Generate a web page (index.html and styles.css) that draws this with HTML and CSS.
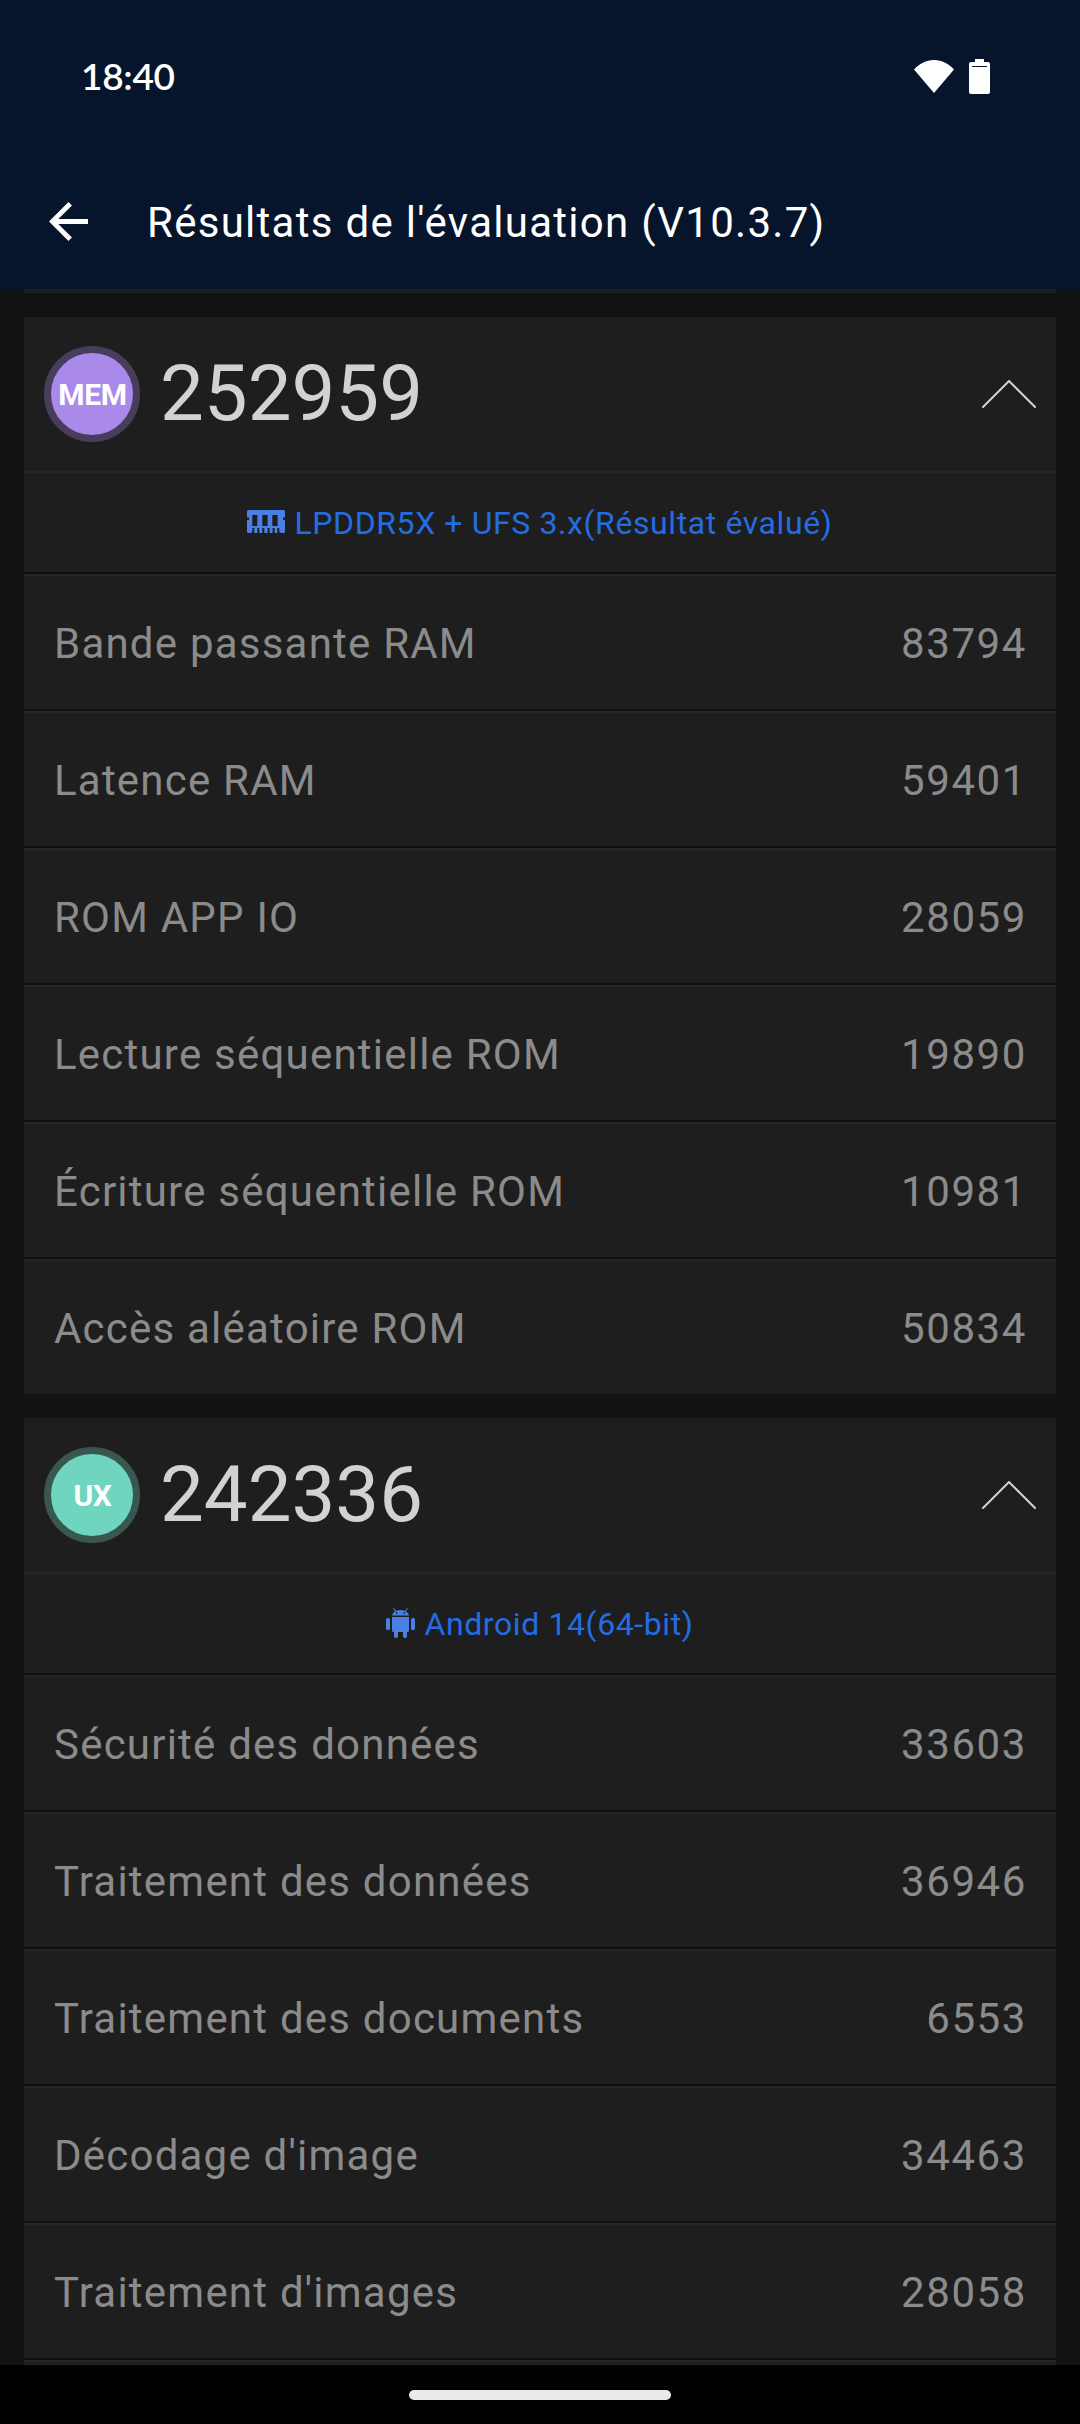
FILE: index.html
```html
<!DOCTYPE html>
<html lang="fr">
<head>
  <meta charset="UTF-8">
  <title>Résultats de l'évaluation</title>
  <link rel="stylesheet" href="styles.css">
</head>
<body>

  <!-- Status bar + toolbar -->
  <header class="header">
    <div class="status-bar">
      <span class="clock">18:40</span>
      <div class="status-icons">
        <svg class="wifi" viewBox="0 0 40 33"><path d="M0 9.5C5 4 12 0 20 0s15 4 20 9.5L20 33z"/></svg>
        <svg class="battery" viewBox="0 0 21 35"><path fill-rule="evenodd" d="M6 0h9v3h4a2 2 0 0 1 2 2v28a2 2 0 0 1-2 2H2a2 2 0 0 1-2-2V5a2 2 0 0 1 2-2h4zM3 7v1h15V7z"/></svg>
      </div>
    </div>
    <div class="toolbar">
      <svg class="back" viewBox="4 4 16 16"><path d="M20 11H7.83l5.59-5.59L12 4l-8 8 8 8 1.41-1.41L7.83 13H20z"/></svg>
      <h1 class="title">Résultats de l'évaluation (V10.3.7)</h1>
    </div>
  </header>

  <main class="results">
    <div class="card-end"></div>

    <!-- Memory -->
    <section class="card">
      <div class="card-head">
        <span class="badge mem">MEM</span>
        <span class="score">252959</span>
        <svg class="chevron" viewBox="0 0 54 28"><path d="M1 27L27 1l26 26"/></svg>
      </div>
      <div class="device">
        <svg class="icon-ram" viewBox="0 0 38 23"><path fill-rule="evenodd" d="M1 0h36l1 1v6.500h-2V10h2v12l-1 1h-3l-1.700-1v-4h-2v5h-2.700v-5h-2v5h-3v-5h-2v5h-3.300v-5h-2v5h-3v-5h-2v5H7.300v-5h-2v4L4 23H1l-1-1V10h2V7.500H0V1zM5.300 5v11h5V5zM15.300 5v11h5.300V5zM25.300 5v11h5.300V5z"/></svg>
        <span>LPDDR5X + UFS 3.x(Résultat évalué)</span>
      </div>
      <div class="row"><span>Bande passante RAM</span><span class="value">83794</span></div>
      <div class="row"><span>Latence RAM</span><span class="value">59401</span></div>
      <div class="row"><span>ROM APP IO</span><span class="value">28059</span></div>
      <div class="row"><span>Lecture séquentielle ROM</span><span class="value">19890</span></div>
      <div class="row"><span>Écriture séquentielle ROM</span><span class="value">10981</span></div>
      <div class="row"><span>Accès aléatoire ROM</span><span class="value">50834</span></div>
    </section>

    <!-- User experience -->
    <section class="card">
      <div class="card-head">
        <span class="badge ux">UX</span>
        <span class="score">242336</span>
        <svg class="chevron" viewBox="0 0 54 28"><path d="M1 27L27 1l26 26"/></svg>
      </div>
      <div class="device">
        <svg class="icon-android" viewBox="0 0 29 30"><path fill-rule="evenodd" d="M8 0l2 3q4.500-2 9 0l2-3 .8.500-1.800 3q2.500 1.500 3 4H6q.5-2.500 3-4L7.200.5zM10 4.200v1.500h1.500V4.200zM17.500 4.200v1.500H19V4.200zM6 9h17v13.500q0 1.500-1.500 1.500H21v4.500q0 1.500-2 1.500t-2-1.500V24h-5v4.500q0 1.500-2 1.500t-2-1.500V24h-.5Q6 24 6 22.500z"/><rect x="0" y="10" width="4" height="12" rx="1.500"/><rect x="25" y="10" width="4" height="12" rx="1.500"/></svg>
        <span>Android 14(64-bit)</span>
      </div>
      <div class="row"><span>Sécurité des données</span><span class="value">33603</span></div>
      <div class="row"><span>Traitement des données</span><span class="value">36946</span></div>
      <div class="row"><span>Traitement des documents</span><span class="value">6553</span></div>
      <div class="row"><span>Décodage d'image</span><span class="value">34463</span></div>
      <div class="row"><span>Traitement d'images</span><span class="value">28058</span></div>
      <div class="row"></div>
    </section>
  </main>

  <!-- Gesture bar -->
  <footer class="nav-bar">
    <div class="pill"></div>
  </footer>

</body>
</html>
```
FILE: styles.css
```css
* {
  box-sizing: border-box;
}
body {
  margin: 0;
  height: 2424px;
  display: flex;
  flex-direction: column;
  overflow: hidden;
  background: #121212;
  font-family: Roboto, sans-serif;
}
.header {
  flex: none;
  height: 289px;
  background: #06152b;
  color: #fff;
}
.header svg {
  fill: #fff;
}
.status-bar {
  height: 153px;
  padding: 0 90px 0 81px;
  display: flex;
  justify-content: space-between;
  align-items: center;
}
.clock {
  padding-bottom: 2px;
  font-family: Lato, sans-serif;
  font-size: 37px;
  font-weight: 600;
  letter-spacing: -0.3px;
}
.status-icons {
  display: flex;
  align-items: center;
  gap: 15px;
}
.wifi {
  width: 40px;
  height: 33px;
}
.battery {
  width: 21px;
  height: 35px;
}
.toolbar {
  height: 136px;
  padding-left: 49px;
  display: flex;
  align-items: center;
}
.back {
  width: 39px;
  height: 39px;
}
.title {
  margin: 3px 0 0 59px;
  font-size: 42px;
  font-weight: 400;
  letter-spacing: 1.28px;
}
.results {
  flex: 1;
  min-height: 0;
  overflow: hidden;
  padding: 0 24px;
}
.card-end {
  height: 4px;
  background: #1e1e1e;
}
.card {
  margin-top: 24px;
  background: #0f0f0f;
}
.card-head {
  height: 154px;
  padding: 0 20px;
  display: flex;
  align-items: center;
  background: #1e1e1e;
}
.badge {
  width: 96px;
  height: 96px;
  padding-left: 1px;
  display: flex;
  align-items: center;
  justify-content: center;
  border: 7.5px solid;
  border-radius: 50%;
  color: #fff;
  font-size: 30px;
  font-weight: 700;
  letter-spacing: -0.3px;
}
.mem {
  background: #a98aeb;
  border-color: #493d5c;
}
.ux {
  background: #6fd5be;
  border-color: #395750;
}
.score {
  flex: 1;
  margin-left: 20px;
  padding-bottom: 1px;
  color: #d2d2d2;
  font-size: 78px;
}
.chevron {
  width: 54px;
  height: 28px;
  fill: none;
  stroke: #d2d2d2;
  stroke-width: 2;
  stroke-linecap: square;
}
.device {
  height: 101px;
  display: flex;
  align-items: center;
  justify-content: center;
  gap: 9px;
  background: #1e1e1e;
  border-top: 2px solid #262626;
  color: #246ce2;
  font-size: 32px;
  letter-spacing: 0.6px;
}
.device svg {
  margin-bottom: 2px;
  fill: #4a7fe4;
}
.icon-ram {
  width: 38px;
  height: 23px;
}
.icon-android {
  width: 29px;
  height: 30px;
}
.row {
  height: 135px;
  margin-top: 2px;
  padding: 2px 29px 0 30px;
  display: flex;
  align-items: center;
  justify-content: space-between;
  background: #1e1e1e;
  border-top: 2px solid #262626;
  color: #8b8b8b;
  font-size: 42px;
  letter-spacing: 1.22px;
}
.value {
  letter-spacing: 1.6px;
}
.nav-bar {
  flex: none;
  height: 59px;
  padding-top: 25px;
  background: #000;
}
.pill {
  width: 262px;
  height: 10px;
  margin: 0 auto;
  border-radius: 5px;
  background: #ebebeb;
}
```
